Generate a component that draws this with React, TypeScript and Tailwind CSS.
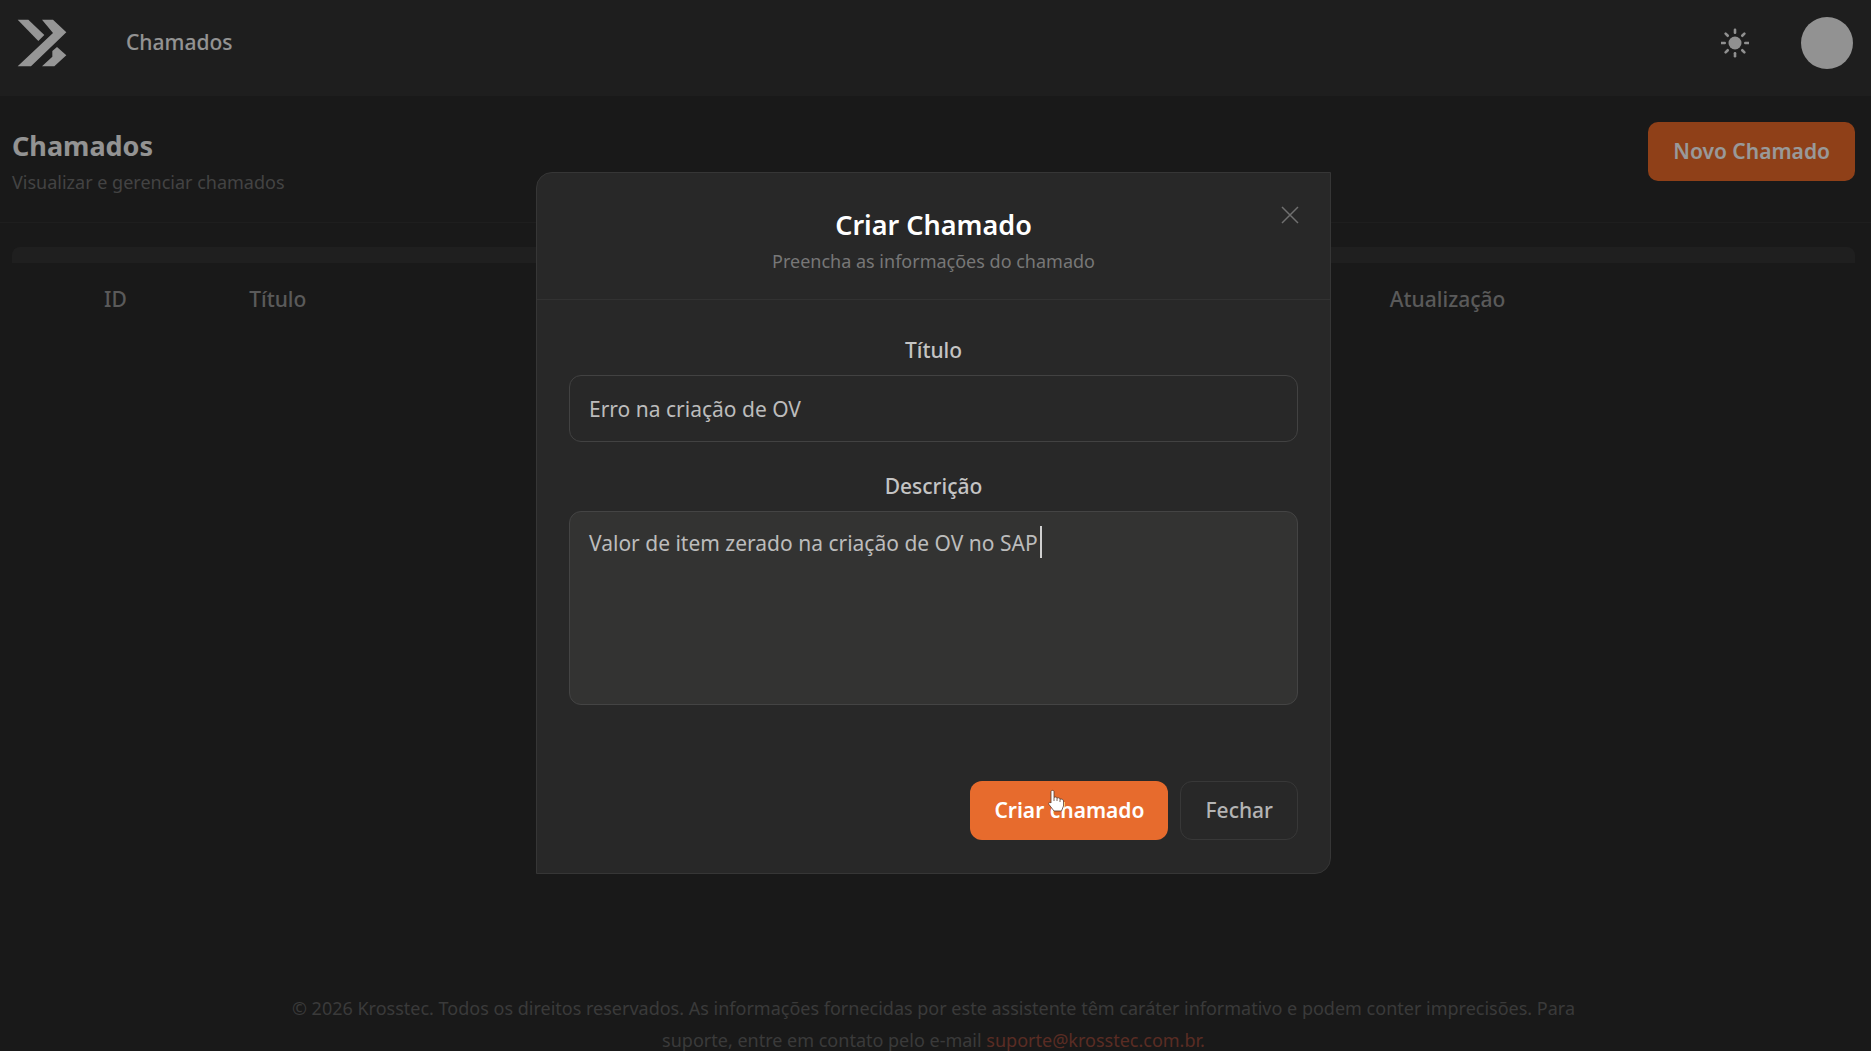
import { useState } from 'react';

const SUN_RAYS = [0, 45, 90, 135, 180, 225, 270, 315];

function Logo() {
  return (
    <svg viewBox="0 0 150 144" className="h-12 w-[50px]" fill="#fafafa" aria-hidden="true">
      <path d="M2 2H34L82 48L64 66Z" />
      <path d="M75 2H108L148 40L42 142H2L108 42Z" />
      <path d="M120 84L148 109L112 142H75L106 113V96Z" />
    </svg>
  );
}

function SunIcon() {
  return (
    <svg viewBox="0 0 28 30" className="h-[30px] w-7" fill="#f0f0f0" aria-hidden="true">
      <circle cx="14" cy="15" r="6.5" />
      {SUN_RAYS.map((angle) => (
        <rect key={angle} x="12.7" y="0.5" width="2.6" height="5.5" rx="1.2" transform={`rotate(${angle} 14 15)`} />
      ))}
    </svg>
  );
}

function HandCursor() {
  return (
    <svg
      viewBox="0 0 18 24"
      className="pointer-events-none absolute top-2 left-[77px] h-6 w-[18px]"
      aria-hidden="true"
    >
      <path
        d="M4 2.5C4 1 7 1 7 2.5V8.5C8 7.5 10 8 10 9.2C11 8.3 13 8.8 13 10.2C14.5 9.6 16.5 10.5 16.5 12V17L14.5 22H7L2 15.5C1 14 2.5 12.5 4 14Z"
        fill="#fff"
        stroke="#5b3a2a"
        strokeWidth="0.8"
      />
      <path d="M7 8.5V12M10 9.2V12M13 10.2V13" fill="none" stroke="#5b3a2a" strokeWidth="0.8" />
    </svg>
  );
}

function Header() {
  return (
    <header className="flex h-24 items-center justify-between bg-[#323232] pr-[18px] pb-[10px] pl-[17px]">
      <div className="flex items-center gap-[59px]">
        <a href="#inicio" aria-label="Krosstec">
          <Logo />
        </a>
        <nav>
          <a href="#chamados" className="text-[21px] font-medium text-[#f5f5f5]">
            Chamados
          </a>
        </nav>
      </div>
      <div className="flex items-center gap-[52px]">
        <button type="button" aria-label="Alternar tema">
          <SunIcon />
        </button>
        <button type="button" aria-label="Perfil" className="size-[52px] rounded-full bg-[#f3f3f3]" />
      </div>
    </header>
  );
}

function TicketsPage() {
  return (
    <main className="flex-1">
      <div className="flex items-start justify-between border-b border-[#323232] pt-[26px] pr-4 pb-6 pl-3">
        <div>
          <h1 className="pt-1 text-[27px] leading-10 font-bold text-[#f5f5f5]">Chamados</h1>
          <p className="text-[18px] leading-8 text-[#717171]">Visualizar e gerenciar chamados</p>
        </div>
        <button
          type="button"
          className="h-[59px] rounded-[10px] bg-[#ee6b28] px-[25px] text-[21px] font-semibold text-white"
        >
          Novo Chamado
        </button>
      </div>

      <div className="pt-6 pr-4 pl-3">
        <div className="h-4 rounded-t-lg bg-[#343434]" />
        <table className="w-full table-fixed text-left text-[21px] text-[#969696]">
          <thead>
            <tr className="h-[74px]">
              <th scope="col" className="w-[12%] pl-[92px] font-medium">ID</th>
              <th scope="col" className="w-[62%] pl-4 font-medium">Título</th>
              <th scope="col" className="pl-[14px] font-medium">Atualização</th>
            </tr>
          </thead>
        </table>
      </div>
    </main>
  );
}

function Footer() {
  return (
    <footer className="flex h-[59px] shrink-0 justify-center pr-1 text-center text-[18px] leading-8 text-[#616161]">
      <p className="max-w-[1300px]">
        © 2026 Krosstec. Todos os direitos reservados. As informações fornecidas por este assistente têm
        caráter informativo e podem conter imprecisões. Para suporte, entre em contato pelo e-mail{' '}
        <a href="mailto:suporte@krosstec.com.br" className="text-[#964a3c]">
          suporte@krosstec.com.br.
        </a>
      </p>
    </footer>
  );
}

function CreateTicketDialog({ onClose }: { onClose: () => void }) {
  const [title, setTitle] = useState('Erro na criação de OV');
  const [description, setDescription] = useState('Valor de item zerado na criação de OV no SAP');

  return (
    <div className="fixed inset-0 flex items-center justify-center bg-black/40 pr-1 pb-[5px]">
      <div
        role="dialog"
        aria-modal="true"
        aria-labelledby="dialog-title"
        className="relative w-full max-w-[795px] rounded-tl-2xl rounded-br-2xl border border-[#363636] bg-[#282828]"
      >
        <div className="border-b border-[#323232] pt-8 pb-[22px] text-center">
          <h2 id="dialog-title" className="text-[27px] leading-10 font-semibold text-white">
            Criar Chamado
          </h2>
          <p className="text-[18px] leading-8 text-[#777777]">Preencha as informações do chamado</p>
        </div>
        <button type="button" aria-label="Fechar janela" onClick={onClose} className="absolute top-8 right-[30px]">
          <svg viewBox="0 0 20 20" className="size-5" stroke="#707070" strokeWidth="1.5" aria-hidden="true">
            <path d="M2 2L18 18M18 2L2 18" />
          </svg>
        </button>

        <form className="px-8 pt-8 pb-[33px]" onSubmit={(e) => e.preventDefault()}>
          <label htmlFor="title" className="block text-center text-[21px] leading-9 font-medium text-[#c4c4c4]">
            Título
          </label>
          <input
            id="title"
            value={title}
            onChange={(e) => setTitle(e.target.value)}
            className="mt-[7px] block h-[67px] w-full rounded-xl border border-[#424242] bg-transparent px-[19px] text-[21px] text-[#bcbcbc] outline-none"
          />

          <label
            htmlFor="description"
            className="mt-[26px] block text-center text-[21px] leading-9 font-medium text-[#c4c4c4]"
          >
            Descrição
          </label>
          <div className="relative mt-[7px]">
            <textarea
              id="description"
              value={description}
              onChange={(e) => setDescription(e.target.value)}
              className="block h-[194px] w-full resize-none rounded-xl border border-[#444444] bg-[#333332] px-[19px] py-[15px] text-[21px] leading-8 text-[#bcbcbc] outline-none"
            />
            <span className="pointer-events-none absolute top-[15px] left-[471px] h-8 w-0.5 bg-[#d0d0d0]" />
          </div>

          <div className="mt-[76px] flex justify-end gap-3">
            <button
              type="submit"
              className="relative h-[59px] rounded-xl bg-[#e76b2d] px-6 text-[21px] font-semibold text-white"
            >
              Criar chamado
              <HandCursor />
            </button>
            <button
              type="button"
              onClick={onClose}
              className="h-[59px] rounded-xl border border-[#383838] px-6 text-[21px] font-medium text-[#b4b4b4]"
            >
              Fechar
            </button>
          </div>
        </form>
      </div>
    </div>
  );
}

export default function App() {
  const [open, setOpen] = useState(true);

  return (
    <div className="flex h-screen flex-col overflow-hidden bg-[#2a2a2a] font-['Noto_Sans',sans-serif]">
      <Header />
      <TicketsPage />
      <Footer />
      {open && <CreateTicketDialog onClose={() => setOpen(false)} />}
    </div>
  );
}
